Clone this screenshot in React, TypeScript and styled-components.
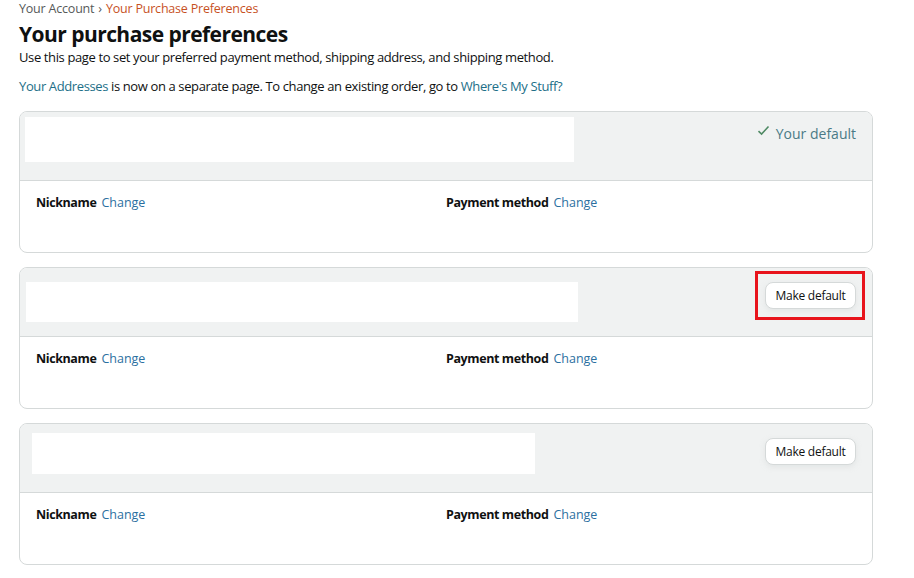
import React from "react";
import styled, { createGlobalStyle } from "styled-components";

const GlobalStyle = createGlobalStyle`
  body {
    margin: 0;
    background: #fff;
    font-family: "Open Sans", "Noto Sans", Arial, sans-serif;
    color: #0f1111;
  }
`;

interface Preference {
  id: number;
  isDefault: boolean;
  highlighted?: boolean;
  mask: { left: number; top: number; width: number; height: number };
}

const preferences: Preference[] = [
  { id: 1, isDefault: true, mask: { left: 5, top: 5, width: 549, height: 45 } },
  { id: 2, isDefault: false, highlighted: true, mask: { left: 6, top: 14, width: 552, height: 40 } },
  { id: 3, isDefault: false, mask: { left: 12, top: 9, width: 503, height: 41 } },
];

const App: React.FC = () => {
  return (
    <>
      <GlobalStyle />
      <Page>
        <Breadcrumb>
          <span className="muted">Your Account</span>
          <span className="sep">›</span>
          <span className="current">Your Purchase Preferences</span>
        </Breadcrumb>
        <Title>Your purchase preferences</Title>
        <Intro>Use this page to set your preferred payment method, shipping address, and shipping method.</Intro>
        <Notice>
          <Link>Your Addresses</Link> is now on a separate page. To change an existing order, go to{" "}
          <Link>Where's My Stuff?</Link>
        </Notice>

        <CardList>
          {preferences.map(pref => (
            <Card key={pref.id}>
              <CardHeader>
                <Mask
                  $left={pref.mask.left}
                  $top={pref.mask.top}
                  $width={pref.mask.width}
                  $height={pref.mask.height}
                />
                {pref.isDefault ? (
                  <DefaultTag>
                    <svg width="13" height="11" viewBox="0 0 13 11">
                      <path d="M1.5 6.2 L4.6 9 L11.5 1.5" fill="none" stroke="#4f8a64" strokeWidth="1.6" />
                    </svg>
                    Your default
                  </DefaultTag>
                ) : (
                  <ButtonSlot>
                    <DefaultButton>Make default</DefaultButton>
                    {pref.highlighted && <Highlight />}
                  </ButtonSlot>
                )}
              </CardHeader>
              <CardBody>
                <Field>
                  <strong>Nickname</strong>
                  <ChangeLink>Change</ChangeLink>
                </Field>
                <Field>
                  <strong>Payment method</strong>
                  <ChangeLink>Change</ChangeLink>
                </Field>
              </CardBody>
            </Card>
          ))}
        </CardList>
      </Page>
    </>
  );
};

const Page = styled.div`
  padding: 1px 41px 0 19px;
`;

const Breadcrumb = styled.div`
  font-size: 12.5px;
  line-height: 15px;
  letter-spacing: -0.2px;
  display: flex;
  gap: 4px;

  .muted {
    color: #565959;
  }

  .sep {
    color: #565959;
  }

  .current {
    color: #c7511f;
  }
`;

const Title = styled.h1`
  margin: 5px 0 0;
  font-size: 21px;
  line-height: 27px;
  font-weight: 700;
  letter-spacing: -0.55px;
  color: #0f1111;
`;

const Intro = styled.p`
  margin: 0;
  font-size: 13px;
  line-height: 19px;
  letter-spacing: -0.38px;
`;

const Notice = styled.p`
  margin: 10px 0 0;
  font-size: 13px;
  line-height: 19px;
  letter-spacing: -0.38px;
`;

const Link = styled.a`
  color: #1d6f88;
  cursor: pointer;
`;

const CardList = styled.div`
  display: flex;
  flex-direction: column;
  gap: 14px;
  margin-top: 15px;
`;

const Card = styled.div`
  border: 1px solid #d5d9d9;
  border-radius: 8px;
  overflow: hidden;
`;

const CardHeader = styled.div`
  position: relative;
  height: 68px;
  background: #f0f2f2;
  border-bottom: 1px solid #d5d9d9;
  display: flex;
  justify-content: flex-end;
  align-items: flex-start;
  padding: 0 16px 0 16px;
`;

interface MaskProps {
  $left: number;
  $top: number;
  $width: number;
  $height: number;
}

// blanked-out address block
const Mask = styled.div<MaskProps>`
  position: absolute;
  left: ${p => p.$left}px;
  top: ${p => p.$top}px;
  width: ${p => p.$width}px;
  height: ${p => p.$height}px;
  background: #fff;
`;

const DefaultTag = styled.div`
  margin-top: 13px;
  display: flex;
  align-items: center;
  gap: 6px;
  font-size: 14px;
  line-height: 18px;
  color: #4a7a86;

  svg {
    margin-top: -8px;
  }
`;

const ButtonSlot = styled.div`
  position: relative;
  margin-top: 14px;
`;

const DefaultButton = styled.button`
  font-family: inherit;
  font-size: 12px;
  letter-spacing: -0.25px;
  color: #0f1111;
  background: #fff;
  border: 1px solid #d5d9d9;
  border-radius: 8px;
  height: 27px;
  width: 91px;
  padding: 0;
  box-shadow: 0 2px 5px rgba(213, 217, 217, 0.5);
  cursor: pointer;
`;

const Highlight = styled.div`
  position: absolute;
  left: -10px;
  top: -11px;
  width: 110px;
  height: 49px;
  box-sizing: border-box;
  border: 3px solid #e8141c;
  pointer-events: none;
`;

const CardBody = styled.div`
  height: 71px;
  box-sizing: border-box;
  padding: 13px 16px 0;
  display: grid;
  grid-template-columns: 1fr 1fr;
  align-items: start;
`;

const Field = styled.div`
  font-size: 12.5px;
  line-height: 18px;
  display: flex;
  gap: 5px;

  strong {
    font-weight: 700;
    letter-spacing: -0.4px;
    color: #0f1111;
  }
`;

const ChangeLink = styled.a`
  color: #2b6f9f;
  cursor: pointer;
`;

export default App;
